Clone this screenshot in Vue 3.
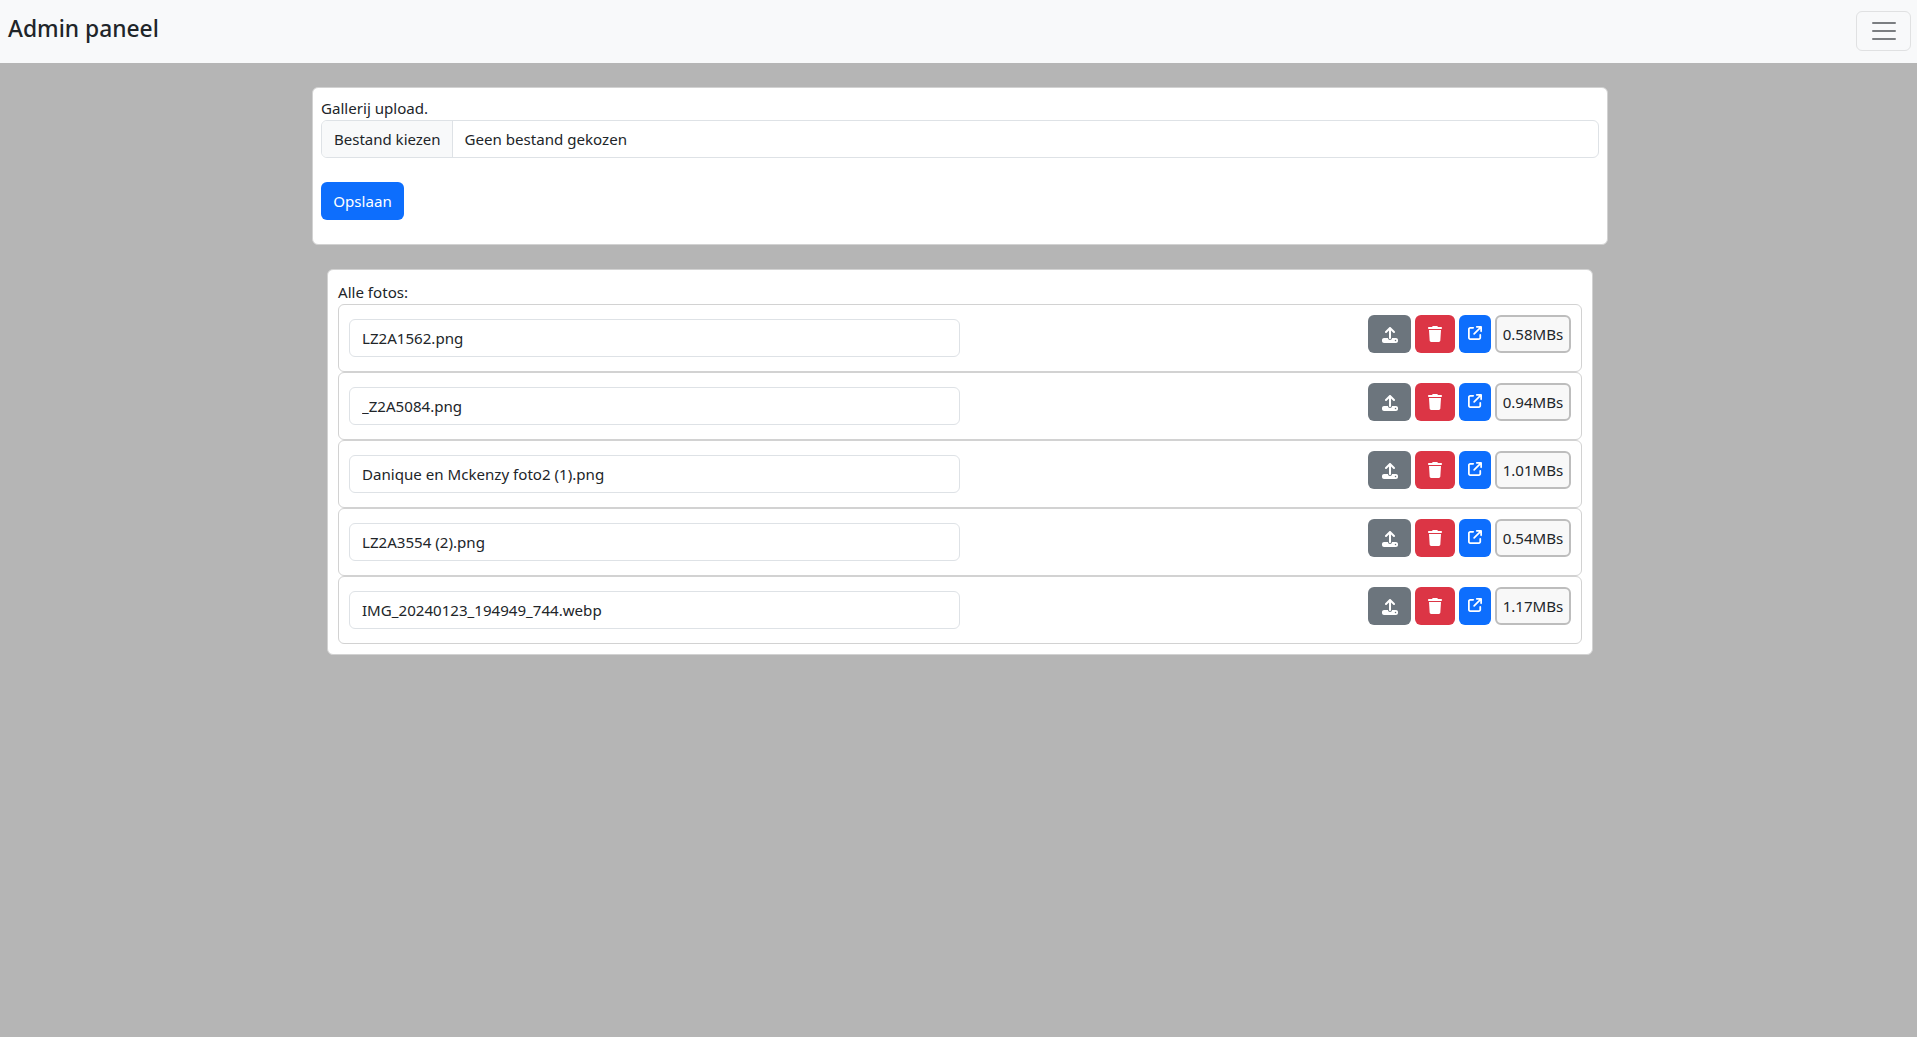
<script setup>
const files = [
  { name: 'LZ2A1562.png', size: '0.58MBs' },
  { name: '_Z2A5084.png', size: '0.94MBs' },
  { name: 'Danique en Mckenzy foto2 (1).png', size: '1.01MBs' },
  { name: 'LZ2A3554 (2).png', size: '0.54MBs' },
  { name: 'IMG_20240123_194949_744.webp', size: '1.17MBs' },
]
</script>

<template>
  <div class="page">
    <nav class="navbar">
      <span class="brand">Admin paneel</span>
      <button class="toggler" type="button" aria-label="Menu">
        <svg width="30" height="30" viewBox="0 0 30 30"><path stroke="rgba(33,37,41,.58)" stroke-linecap="round" stroke-miterlimit="10" stroke-width="2" d="M4 7h22M4 15h22M4 23h22"/></svg>
      </button>
    </nav>
    <main class="main">
      <section class="card upload">
        <div class="label">Gallerij upload.</div>
        <div class="file">
          <span class="file-btn">Bestand kiezen</span>
          <span class="file-name">Geen bestand gekozen</span>
        </div>
        <button class="btn primary save" type="button">Opslaan</button>
      </section>
      <section class="card list">
        <div class="label">Alle fotos:</div>
        <div v-for="f in files" :key="f.name" class="row">
          <div class="col">
            <input class="name" type="text" :value="f.name" />
          </div>
          <div class="actions">
            <button class="btn secondary" type="button" aria-label="Upload">
              <svg class="icon-upload" viewBox="0 0 512 512"><path fill="#fff" d="M288 109.3V352c0 17.7-14.3 32-32 32s-32-14.3-32-32V109.3l-73.4 73.4c-12.5 12.5-32.8 12.5-45.3 0s-12.5-32.8 0-45.3l128-128c12.5-12.5 32.8-12.5 45.3 0l128 128c12.5 12.5 12.5 32.8 0 45.3s-32.8 12.5-45.3 0L288 109.3zM64 352H192c0 35.3 28.7 64 64 64s64-28.7 64-64H448c35.3 0 64 28.7 64 64v32c0 35.3-28.7 64-64 64H64c-35.3 0-64-28.7-64-64V416c0-35.3 28.7-64 64-64zM432 456a24 24 0 1 0 0-48 24 24 0 1 0 0 48z"/></svg>
            </button>
            <button class="btn danger" type="button" aria-label="Verwijderen">
              <svg class="icon-trash" viewBox="0 0 448 512"><path fill="#fff" d="M135.2 17.7L128 32H32C14.3 32 0 46.3 0 64S14.3 96 32 96H416c17.7 0 32-14.3 32-32s-14.3-32-32-32H320l-7.2-14.3C307.4 6.8 296.3 0 284.2 0H163.8c-12.1 0-23.2 6.8-28.6 17.7zM416 128H32L53.2 467c1.6 25.3 22.6 45 47.9 45H346.9c25.3 0 46.3-19.7 47.9-45L416 128z"/></svg>
            </button>
            <button class="btn primary link" type="button" aria-label="Openen">
              <svg class="icon-link" viewBox="0 0 512 512"><path fill="#fff" d="M320 0c-17.7 0-32 14.3-32 32s14.3 32 32 32h82.7L201.4 265.4c-12.5 12.5-12.5 32.8 0 45.3s32.8 12.5 45.3 0L448 109.3V192c0 17.7 14.3 32 32 32s32-14.3 32-32V32c0-17.7-14.3-32-32-32H320zM80 32C35.8 32 0 67.8 0 112V432c0 44.2 35.8 80 80 80H400c44.2 0 80-35.8 80-80V320c0-17.7-14.3-32-32-32s-32 14.3-32 32V432c0 8.8-7.2 16-16 16H80c-8.8 0-16-7.2-16-16V112c0-8.8 7.2-16 16-16H192c17.7 0 32-14.3 32-32s-14.3-32-32-32H80z"/></svg>
            </button>
            <button class="size" type="button">{{ f.size }}</button>
          </div>
        </div>
      </section>
    </main>
  </div>
</template>

<style>
html, body { margin: 0; background: #b5b5b5; }
</style>

<style scoped>
.page {
  background: #b5b5b5;
  font-family: "Noto Sans", "Open Sans", sans-serif;
  font-size: 15.1px;
  line-height: 24px;
  color: #212529;
}
.navbar {
  height: 63px;
  box-sizing: border-box;
  background: #f8f9fa;
  display: flex;
  align-items: center;
  justify-content: space-between;
  padding: 0 6px 1px 8px;
}
.brand {
  font-size: 22.8px;
  font-weight: 500;
  line-height: 30px;
  padding-bottom: 5px;
  color: #212529;
}
.toggler {
  width: 55px;
  height: 40px;
  box-sizing: border-box;
  padding: 0;
  display: flex;
  align-items: center;
  justify-content: center;
  background: transparent;
  border: 1px solid #e0e1e2;
  border-radius: 6px;
}
.main {
  width: 1296px;
  margin-left: 312px;
  padding-top: 24px;
  display: flex;
  flex-direction: column;
  gap: 24px;
}
.card {
  background: #fff;
  border: 1px solid #d2d2d2;
  border-radius: 6px;
  box-sizing: border-box;
}
.upload { padding: 8px; height: 158px; }
.label { height: 24px; }
.file {
  display: flex;
  height: 38px;
  box-sizing: border-box;
  border: 1px solid #dee2e6;
  border-radius: 6px;
  overflow: hidden;
  background: #fff;
}
.file-btn {
  width: 131px;
  box-sizing: border-box;
  padding: 6px 12px;
  font-size: 15px;
  white-space: nowrap;
  background: #f8f9fa;
  border-right: 1px solid #dee2e6;
}
.file-name { padding: 6px 11.5px; }
.btn {
  height: 38px;
  box-sizing: border-box;
  border: 1px solid transparent;
  border-radius: 6px;
  color: #fff;
  font: inherit;
  display: flex;
  align-items: center;
  justify-content: center;
  padding: 0;
}
.primary { background: #0d6efd; }
.secondary { background: #6c757d; width: 43px; }
.danger { background: #dc3545; width: 40px; }
.save { margin-top: 24px; width: 83px; }
.link { width: 32px; align-items: flex-start; padding-top: 10px; }
.list { margin: 0 15px; padding: 10px; }
.row {
  height: 68px;
  box-sizing: border-box;
  border: 1px solid #d2d2d2;
  border-radius: 6px;
  padding: 10px;
  display: flex;
  justify-content: space-between;
  align-items: flex-start;
}
.col { width: 50%; padding-top: 4px; }
.name {
  display: block;
  width: 100%;
  height: 38px;
  box-sizing: border-box;
  border: 1px solid #dee2e6;
  border-radius: 6px;
  padding: 6px 12px;
  font: inherit;
  color: #212529;
  outline: none;
}
.actions { display: flex; gap: 4px; }
.size {
  width: 76px;
  height: 38px;
  box-sizing: border-box;
  padding: 0;
  border: 2px solid #bdbdbd;
  border-radius: 6px;
  background: #f8f8f8;
  font: inherit;
  color: #212529;
}
.icon-upload { width: 16px; height: 16px; display: block; margin-top: 1px; }
.icon-trash { width: 14px; height: 16px; display: block; }
.icon-link { width: 14px; height: 14px; display: block; }
</style>
